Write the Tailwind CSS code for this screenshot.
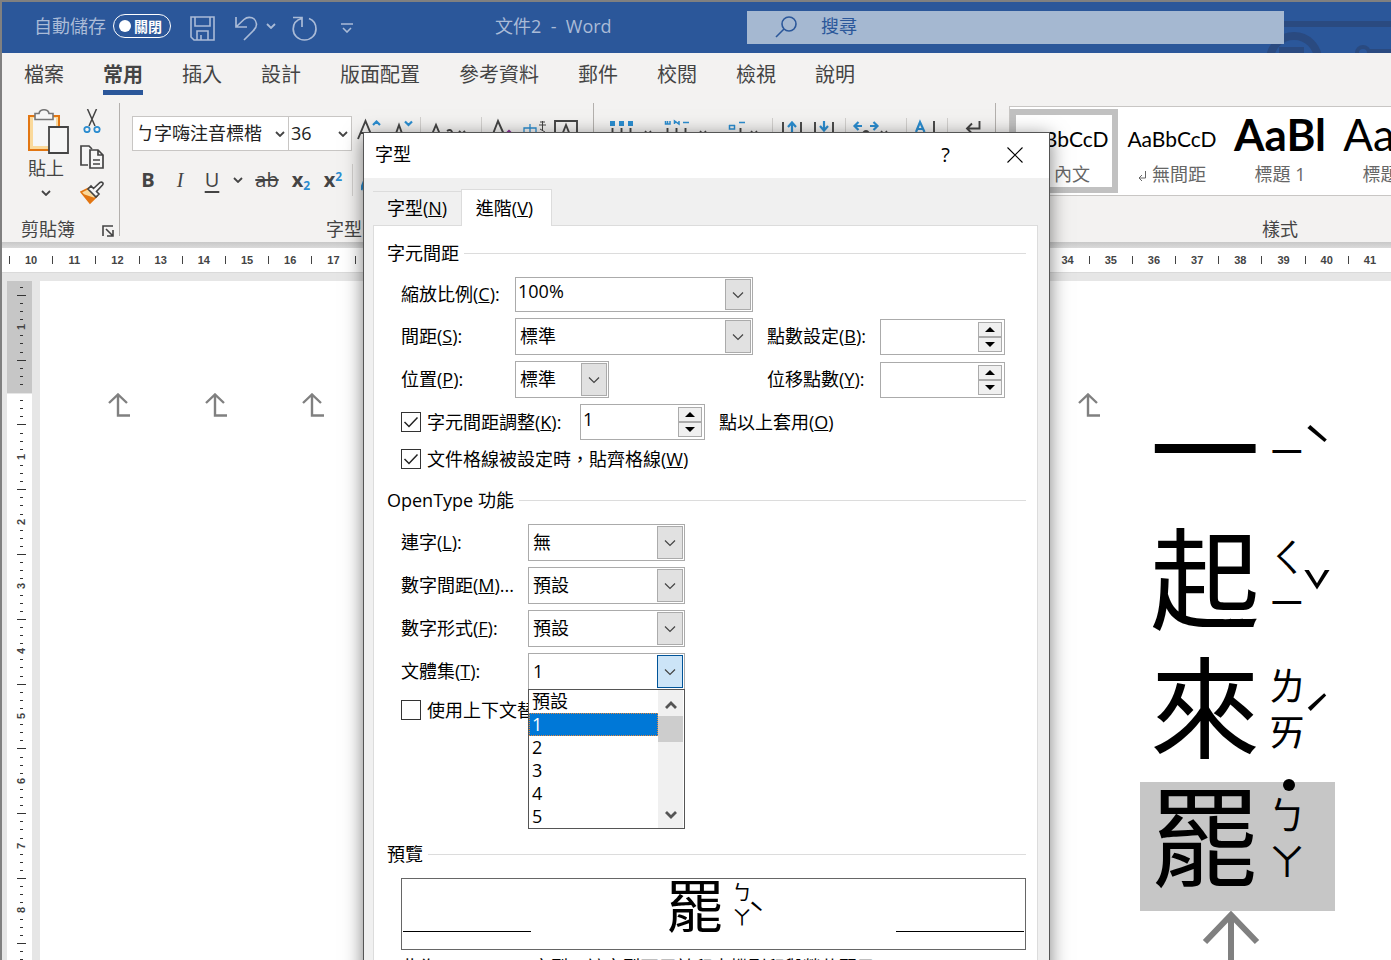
<!DOCTYPE html>
<html lang="zh-Hant">
<head>
<meta charset="utf-8">
<title>文件2 - Word</title>
<script src="https://cdn.jsdelivr.net/npm/@tailwindcss/browser@4"></script>
</head>
<body class="font-['Open_Sans','Noto_Sans_CJK_TC',sans-serif] text-[18px] font-[390]">
<svg class="hidden">
  <symbol id="chev" viewBox="0 0 12 8"><path d="M1 1.5 L6 6.5 L11 1.5" fill="none" stroke="#444" stroke-width="1.2"/></symbol>
  <symbol id="chevb" viewBox="0 0 10 6"><path d="M1 1 L5 5 L9 1" fill="none" stroke="currentColor" stroke-width="1.8"/></symbol>
  <symbol id="up" viewBox="0 0 10 5"><path d="M0 5 L5 0 L10 5Z"/></symbol>
  <symbol id="down" viewBox="0 0 10 5"><path d="M0 0 L5 5 L10 0Z"/></symbol>
  <symbol id="ret" viewBox="0 0 22 24"><path d="M1 10 L10 1.5 L19 10 M10 2 V22.5 H22" fill="none" stroke="#808080" stroke-width="2.4"/></symbol>
</svg>
<div class="relative flex h-screen flex-col overflow-hidden border-t-2 border-l-2 border-[#808080] bg-[#e6e6e6]">

  <header class="relative flex h-[51px] shrink-0 items-center bg-[#2b579a] pb-[3px] pl-8 text-[#aabbd7]">
    <svg class="absolute top-0 right-0 h-[51px] w-[130px]" viewBox="0 0 130 51" fill="none" stroke="#2a4a80"><path d="M20 22H130" stroke-width="6"/><circle cx="33" cy="58" r="24" stroke-width="8"/><path d="M18 48H43" stroke-width="6"/><circle cx="102" cy="51" r="6" stroke-width="4"/><path d="M108 49H130" stroke-width="4"/></svg>
    <span class="w-[71px] whitespace-nowrap">自動儲存</span>
    <button class="ml-2 flex h-6 w-[58px] items-center gap-[3px] rounded-full border border-white pl-[5px] text-[14px] font-bold text-white"><span class="size-3 rounded-full bg-white"></span>關閉</button>
    <button class="ml-[19px]" aria-label="儲存"><svg class="mt-1 size-[25px]" viewBox="0 0 25 25" fill="none" stroke="currentColor" stroke-width="1.6"><path d="M1 1H24V24H4L1 21Z M5 1V10H20V1 M7 24V15H18V24 M11 24V19"/></svg></button>
    <button class="ml-5" aria-label="復原"><svg class="mt-1 h-[25px] w-[23px]" viewBox="0 0 23 25" fill="none" stroke="currentColor" stroke-width="1.7"><path d="M1 1V11H12 M1.500 10.500L9 3.500C14 -1 21 2 21.500 8C21.700 11 20 13 18 15L9 24"/></svg></button>
    <button class="ml-2" aria-label="復原選項"><svg class="h-[6px] w-[10px]"><use href="#chevb"/></svg></button>
    <button class="ml-4" aria-label="重複"><svg class="mt-1 size-[25px]" viewBox="0 0 25 25" fill="none" stroke="currentColor" stroke-width="1.7"><path d="M1 1.500H10V11 M10 2.500C4 4 1.200 8 1.200 13C1.200 19 6 24 12.500 24C19 24 24 19 24 13C24 8 21 4 17 2.500"/></svg></button>
    <button class="ml-6" aria-label="自訂快速存取工具列"><svg class="mt-1 h-[10px] w-[12px]" viewBox="0 0 12 10" fill="none" stroke="currentColor" stroke-width="1.6"><path d="M0 1H12 M2 5L6 9L10 5"/></svg></button>
    <h1 class="ml-[142px] whitespace-pre">文件2  -  Word</h1>
    <label class="absolute top-[9px] right-[107px] left-[745px] flex h-[33px] items-center bg-[#a5b8d1] pb-[2px] pl-7 text-[#2b579a]">
      <svg class="size-[22px]" viewBox="0 0 22 22" fill="none" stroke="currentColor" stroke-width="1.6"><circle cx="14" cy="8" r="7"/><path d="M9 13L1 21"/></svg>
      <input class="ml-6 flex-1 bg-transparent outline-none placeholder:text-[#2b579a]" placeholder="搜尋" aria-label="搜尋">
    </label>
  </header>

  <nav class="flex h-[47px] shrink-0 gap-[39px] bg-[#f3f2f1] pt-1.5 pl-[22px] text-[20px] text-[#444]">
    <a href="#" class="leading-[31px]">檔案</a>
    <a href="#" class="h-9 border-b-[5px] border-[#2b579a] leading-[31px] font-bold">常用</a>
    <a href="#" class="leading-[31px]">插入</a>
    <a href="#" class="leading-[31px]">設計</a>
    <a href="#" class="leading-[31px]">版面配置</a>
    <a href="#" class="leading-[31px]">參考資料</a>
    <a href="#" class="leading-[31px]">郵件</a>
    <a href="#" class="leading-[31px]">校閱</a>
    <a href="#" class="leading-[31px]">檢視</a>
    <a href="#" class="leading-[31px]">說明</a>
  </nav>

  <section class="flex h-[142px] shrink-0 bg-[#f3f2f1] text-[#444]">
    <div class="my-[3px] mb-[6px] flex w-[118px] shrink-0 flex-col border-r border-[#b3b0ad]">
      <div class="flex gap-[11px] pt-1.5 pl-[26px]">
        <button class="flex w-[41px] flex-col items-start">
          <svg class="h-[45px] w-[41px]" viewBox="0 0 41 45" fill="none"><path d="M1 7H31V41H1Z" fill="#fad99b" stroke="#e27612" stroke-width="2"/><path d="M5 9H28V37H5Z" fill="#f6f6f6"/><path d="M7 10.500V4.500H11C12 -0.500 20 -0.500 21 4.500H25V10.500Z" fill="#f6f6f6" stroke="#777" stroke-width="1.6"/><path d="M21 18H40V44H21Z" fill="#f6f6f6" stroke="#444" stroke-width="1.8"/></svg>
          <span class="leading-7 whitespace-nowrap">貼上</span>
          <svg class="mt-2 ml-[13px] h-[6px] w-[10px]"><use href="#chevb"/></svg>
        </button>
        <div class="flex flex-col gap-3">
          <button aria-label="剪下"><svg class="size-6" viewBox="0 0 24 24" fill="none"><path d="M7.500 0L15 17 M16.500 0L9 17" stroke="#444" stroke-width="1.5"/><circle cx="7" cy="20.500" r="2.700" stroke="#2b8dd0" stroke-width="1.800"/><circle cx="17" cy="20.500" r="2.700" stroke="#2b8dd0" stroke-width="1.800"/></svg></button>
          <button aria-label="複製"><svg class="size-6" viewBox="0 0 24 24" fill="#f6f6f6" stroke="#444" stroke-width="1.700"><path d="M8 20H1V1H9L12 4"/><path d="M10 5H18L23 10V23H10Z M18 5V10H23 M13 15H20 M13 19H20"/></svg></button>
          <button aria-label="複製格式"><svg class="size-6" viewBox="0 0 24 24"><path d="M1 11L9 7L17 15L10 22Z" fill="#fad99b" stroke="#e27612" stroke-width="1.700"/><path d="M3 13L15 17L10 22Z" fill="#e27612"/><path d="M8 8L11 5L13.500 7.500L20 1.500C22 0.500 24 2 22.500 4L16.500 10.500L19 13L16 16Z" fill="#f6f6f6" stroke="#444" stroke-width="1.600"/></svg></button>
        </div>
      </div>
      <div class="mt-auto flex h-[14px] items-center justify-between pr-[5px] pl-[19px] leading-[14px]"><span>剪貼簿</span>
        <button aria-label="剪貼簿設定"><svg class="mt-1 size-3" viewBox="0 0 12 12" fill="none" stroke="#444" stroke-width="1.600"><path d="M1 11V1H11 M4 4L11 11 M11 5V11H5"/></svg></button></div>
    </div>
    <div class="my-[3px] mb-[6px] flex w-[474px] shrink-0 flex-col border-r border-[#b3b0ad] pl-3">
      <div class="flex pt-[13px]">
        <label class="flex h-[35px] w-[157px] items-center border border-[#c8c6c4] bg-white pr-[3px] pl-[3px]"><input class="w-0 flex-1 text-[#222] outline-none" value="ㄅ字嗨注音標楷" aria-label="字型"><svg class="h-[6px] w-[10px]"><use href="#chevb"/></svg></label>
        <label class="-ml-px flex h-[35px] w-[64px] items-center border border-[#c8c6c4] bg-white pr-[3px] pl-[2px]"><input class="w-0 flex-1 text-[#222] outline-none" value="36" aria-label="字型大小"><svg class="h-[6px] w-[10px]"><use href="#chevb"/></svg></label>
        <svg class="h-[35px] w-[235px]" viewBox="352 116 235 35" fill="none" stroke="#444" stroke-width="1.900"><path d="M358 139L365.500 121L373 139 M361 133H370"/><path d="M394 139L399 125L404 139"/><path d="M430 139L436 125L442 139 M447 131Q453 127 453 139 M459 131L462 134L465 131"/><path d="M491 139L498 121L506 139"/><path d="M555 140V121H577V140 M560 140L566 125L572 140"/><path d="M373 125L376.500 121.500L380 125 M405 121.500L408.500 125L412 121.500" stroke="#2b8dd0" stroke-width="2.200"/><path d="M505 135L509 131L513 135" stroke="#8b2f97" stroke-width="2.200"/><path d="M524 128H536V140H524Z M530 124V140" stroke="#2b8dd0" stroke-width="1.300"/><path d="M540 122H545M542.500 121V131M539 125H546M540 129L545 132" stroke-width="1"/><path d="M420.500 117V150 M481.500 117V150" stroke="#d2d0ce" stroke-width="1"/></svg>
      </div>
      <div class="mt-[13px] flex h-8 items-center font-['Open_Sans',sans-serif] text-[20px]">
        <button class="ml-2 w-4 font-bold">B</button>
        <button class="ml-4 w-4 font-['Liberation_Serif',serif] font-normal italic">I</button>
        <button class="ml-4 w-4 font-normal underline underline-offset-4">U</button>
        <button class="ml-[13px]" aria-label="底線樣式"><svg class="h-[6px] w-[10px]"><use href="#chevb"/></svg></button>
        <button class="ml-3 w-6 font-normal line-through">ab</button>
        <button class="ml-3 w-5 font-bold">x<sub class="text-[12px] text-[#2b8dd0]">2</sub></button>
        <button class="ml-3 w-5 font-bold">x<sup class="text-[12px] text-[#2b8dd0]">2</sup></button>
        <span class="ml-[9px] h-8 border-l border-[#d2d0ce]"></span>
        <svg class="ml-2 h-6 w-4" viewBox="0 0 16 24"><path d="M0 22L7 4L14 22" fill="none" stroke="#2b8dd0" stroke-width="3"/></svg>
      </div>
      <div class="mt-auto pl-[194px] leading-[14px]">字型</div>
    </div>
    <div class="my-[3px] mb-[6px] w-[402px] shrink-0 border-r border-[#b3b0ad]">
      <svg class="mt-[13px] h-[35px] w-[400px]" viewBox="594 116 400 35" fill="none" stroke="#444" stroke-width="1.900"><path d="M610 121H615V126H610Z M619 121H624V126H619Z M628 121H633V126H628Z" fill="#2b8dd0" stroke="none"/><path d="M612.500 128V140 M621.500 128V140 M630.500 128V140 M667.500 128V140 M676.500 128V140 M685.500 128V140 M740.500 128V140"/><path d="M645 131L648 134L651 131 M700 131L703 134L706 131 M751 131L754 134L757 131 M881 131L884 134L887 131" stroke-width="1.600"/><path d="M665.500 121V124H670V121 M667.500 121V124 M674.500 124V121L679 124V121 M683 122.500H689 M729 125.500H735 M729.500 125V129H734.500V125 M739 122.500H745" stroke="#2b8dd0" stroke-width="1.500"/><path d="M783 122V140 M801 122V140 M815 122V140 M833 122V140 M934 121V140"/><path d="M792 140V122.500 M788 127L792 122.500L796 127 M824 121V130 M820 126L824 130.500L828 126 M862 126H854.500 M858.500 122L854.500 126L858.500 130 M870 126H877.500 M873.500 122L877.500 126L873.500 130 M916 132L920 122L924.500 132 M917 129H923" stroke="#2b8dd0" stroke-width="2.200"/><path d="M863 133Q866 129 869 133" stroke-width="2"/><path d="M979.500 121V128.500H967 M972 123.500L967 128.500L972 133.500"/><path d="M772.500 118V150 M845.500 118V150 M906.500 118V150 M947.500 118V150" stroke="#d2d0ce" stroke-width="1"/></svg>
    </div>
    <div class="flex min-w-0 flex-1 flex-col overflow-hidden pl-[13px]">
      <div class="mt-[6px] flex h-[90px] border border-r-0 border-[#c8c6c4] bg-white pt-[2px] text-[#666]">
        <button class="flex h-[84px] w-[108px] shrink-0 flex-col items-center border-[6px] border-[#c1c1c1] pt-[6px]"><span class="font-[Lato] text-[21px] leading-[36px] font-normal text-black">AaBbCcD</span><span class="mt-[3px] ml-4 leading-7">內文</span></button>
        <button class="flex h-[84px] w-[108px] shrink-0 flex-col items-center pt-3"><span class="font-[Lato] text-[21px] leading-[36px] font-normal text-black">AaBbCcD</span><span class="mt-[3px] flex items-center gap-[6px] leading-7"><svg class="mt-1 h-[10px] w-2" viewBox="0 0 8 10" fill="none" stroke="#666"><path d="M7.500 0V7H1 M4 4L1 7L4 10"/></svg>無間距</span></button>
        <button class="flex h-[84px] w-[108px] shrink-0 flex-col items-center pt-[3px]"><span class="font-[Lato] text-[44px] leading-[44px] font-bold text-black">AaBl</span><span class="mt-1 leading-7">標題 1</span></button>
        <button class="flex h-[84px] w-[108px] shrink-0 flex-col items-center pt-[3px]"><span class="font-[Lato] text-[44px] leading-[44px] font-normal text-black">AaBl</span><span class="mt-1 leading-7">標題 2</span></button>
      </div>
      <div class="mt-[24px] pl-[253px] leading-[18px] whitespace-nowrap">樣式</div>
    </div>
  </section>
  <div class="h-[6px] shrink-0 bg-linear-to-b from-[#c8c8c8] to-[#dadada]"></div>

  <div id="hruler" class="flex h-6 shrink-0 items-center bg-white pl-[7px] font-['Liberation_Sans',sans-serif] text-[11px] font-bold text-[#444]"></div>

  <main class="flex min-h-0 flex-1 gap-2 border-t border-[#dadada] pt-2 pl-[5px]">
    <svg id="vruler" class="h-full w-[25px] shrink-0 font-['Liberation_Sans',sans-serif] text-[11px] font-bold"></svg>
    <div class="flex flex-1 overflow-hidden bg-white">
      <div id="marks" class="mt-28 ml-[68px] flex gap-[75px]"></div>
      <div class="mt-[114px] ml-10 w-[195px] shrink-0 font-['Noto_Sans_CJK_TC',sans-serif] font-normal text-black">
        <div class="flex h-[129px] pl-[10px]"><span class="w-[110px] text-[110px] leading-[98px]">一</span><span class="mt-8 ml-2 w-[38px] text-[38px] leading-[46px]">ㄧ</span><span class="mt-6 -ml-1 w-0 text-[50px] leading-[50px]">ˋ</span></div>
        <div class="flex h-[129px] pl-[10px]"><span class="w-[110px] text-[110px] leading-[98px]">起</span><span class="mt-2 ml-2 w-[38px] text-[38px] leading-[46px]">ㄑㄧ</span><span class="mt-10 -ml-1 w-0 text-[50px] leading-[50px]">ˇ</span></div>
        <div class="flex h-[129px] pl-[10px]"><span class="w-[110px] text-[110px] leading-[98px]">來</span><span class="mt-2 ml-2 w-[38px] text-[38px] leading-[46px]">ㄌㄞ</span><span class="mt-9 -ml-1 w-0 text-[50px] leading-[50px]">ˊ</span></div>
        <div class="relative flex h-[129px] bg-[#c6c6c6] pl-[10px]"><span class="w-[110px] text-[110px] leading-[98px]">罷</span><span class="mt-2 ml-2 w-[38px] text-[38px] leading-[46px]">ㄅㄚ</span><span class="absolute -top-[3px] left-[143px] size-3 rounded-full bg-black"></span></div>
        <svg class="ml-[62px] h-[60px] w-[58px]" viewBox="0 0 58 60" fill="none" stroke="#808080" stroke-width="6"><path d="M3 31L29 4L55 31 M29 5V60"/></svg>
      </div>
    </div>
  </main>

  <div role="dialog" aria-label="字型" class="absolute top-[130px] left-[361px] w-[687px] border border-[#555] bg-[#f0f0f0] text-black shadow-[0_4px_18px_rgba(0,0,0,0.5)]">
    <div class="flex h-[45px] items-center bg-white pr-[26px] pb-[2px] pl-[11px]">
      <span>字型</span>
      <button class="mr-[57px] ml-auto text-[20px]" aria-label="說明">?</button>
      <button aria-label="關閉"><svg class="size-4" viewBox="0 0 16 16" stroke="#000" stroke-width="1.100"><path d="M0.500 0.500L15.500 15.500M15.500 0.500L0.500 15.500"/></svg></button>
    </div>
    <div class="px-[9px] pt-[11px] pb-10">
      <div class="relative -mb-px flex items-end">
        <button class="h-[35px] w-[88px] border-t border-b border-[#dcdcdc]">字型(<u>N</u>)</button>
        <button class="h-[37px] w-[91px] border border-b-0 border-[#dcdcdc] bg-white pr-1">進階(<u>V</u>)</button>
      </div>
      <div class="mr-[2px] border border-[#dcdcdc] bg-white pt-[15px] pr-[11px] pl-[13px]">
        <h2 class="flex h-6 items-center gap-[5px]">字元間距<span class="flex-1 border-t border-[#dcdcdc]"></span></h2>
        <div class="pl-[14px]">
          <div class="mt-3 flex h-[35px] items-center"><label for="scale" class="w-[114px]">縮放比例(<u>C</u>):</label>
            <div class="flex h-full w-[238px] border border-[#ababab] p-px"><input id="scale" value="100%" class="w-0 flex-1 pb-1.5 pl-px outline-none"><button class="flex w-[26px] items-center justify-center border border-[#ababab] bg-[#e1e1e1]" aria-label="選擇縮放比例"><svg class="h-2 w-3"><use href="#chev"/></svg></button></div></div>
          <div class="mt-1.5 flex h-[37px] items-center"><label for="spacing" class="w-[114px]">間距(<u>S</u>):</label>
            <div class="flex h-full w-[238px] border border-[#ababab] p-px"><select id="spacing" class="flex-1 appearance-none pl-[3px] outline-none"><option>標準</option></select><span class="flex w-[26px] items-center justify-center border border-[#ababab] bg-[#e1e1e1]"><svg class="h-2 w-3"><use href="#chev"/></svg></span></div>
            <label for="by1" class="ml-[14px] w-[113px]">點數設定(<u>B</u>):</label>
            <div class="flex h-9 w-[125px] border border-[#ababab] p-[2px]"><input id="by1" class="w-0 flex-1 outline-none"><div class="flex w-6 flex-col"><button class="flex h-[15px] flex-1 items-center justify-center border border-[#ababab] bg-[#f0f0f0]" aria-label="增加"><svg class="h-[5px] w-[10px]"><use href="#up"/></svg></button><button class="flex h-[15px] flex-1 items-center justify-center border border-[#ababab] bg-[#f0f0f0]" aria-label="減少"><svg class="h-[5px] w-[10px]"><use href="#down"/></svg></button></div></div></div>
          <div class="mt-1.5 flex h-[37px] items-center"><label for="pos" class="w-[114px]">位置(<u>P</u>):</label>
            <div class="flex h-full w-[94px] border border-[#ababab] p-px"><select id="pos" class="flex-1 appearance-none pl-[3px] outline-none"><option>標準</option></select><span class="flex w-[26px] items-center justify-center border border-[#ababab] bg-[#e1e1e1]"><svg class="h-2 w-3"><use href="#chev"/></svg></span></div>
            <label for="by2" class="ml-[158px] w-[113px]">位移點數(<u>Y</u>):</label>
            <div class="flex h-9 w-[125px] border border-[#ababab] p-[2px]"><input id="by2" class="w-0 flex-1 outline-none"><div class="flex w-6 flex-col"><button class="flex h-[15px] flex-1 items-center justify-center border border-[#ababab] bg-[#f0f0f0]" aria-label="增加"><svg class="h-[5px] w-[10px]"><use href="#up"/></svg></button><button class="flex h-[15px] flex-1 items-center justify-center border border-[#ababab] bg-[#f0f0f0]" aria-label="減少"><svg class="h-[5px] w-[10px]"><use href="#down"/></svg></button></div></div></div>
          <div class="mt-1.5 flex h-9 items-center"><label class="flex w-[179px] items-center gap-1.5"><span class="grid"><input type="checkbox" checked class="peer col-start-1 row-start-1 size-5 appearance-none border border-[#333] bg-white"><svg class="pointer-events-none invisible col-start-1 row-start-1 size-5 peer-checked:visible" viewBox="0 0 20 20" fill="none" stroke="#222" stroke-width="1.500"><path d="M3.500 10L8 14.500L16.500 5.500"/></svg></span><span class="whitespace-nowrap">字元間距調整(<u>K</u>):</span></label>
            <div class="flex h-9 w-[125px] border border-[#ababab] p-[2px]"><input id="kern" value="1" class="w-0 flex-1 pb-1.5 outline-none"><div class="flex w-6 flex-col"><button class="flex h-[15px] flex-1 items-center justify-center border border-[#ababab] bg-[#f0f0f0]" aria-label="增加"><svg class="h-[5px] w-[10px]"><use href="#up"/></svg></button><button class="flex h-[15px] flex-1 items-center justify-center border border-[#ababab] bg-[#f0f0f0]" aria-label="減少"><svg class="h-[5px] w-[10px]"><use href="#down"/></svg></button></div></div>
            <label for="kern" class="ml-[14px]">點以上套用(<u>O</u>)</label></div>
          <label class="mt-2 flex h-[22px] items-center gap-1.5"><span class="grid"><input type="checkbox" checked class="peer col-start-1 row-start-1 size-5 appearance-none border border-[#333] bg-white"><svg class="pointer-events-none invisible col-start-1 row-start-1 size-5 peer-checked:visible" viewBox="0 0 20 20" fill="none" stroke="#222" stroke-width="1.500"><path d="M3.500 10L8 14.500L16.500 5.500"/></svg></span><span>文件格線被設定時，貼齊格線(<u>W</u>)</span></label>
        </div>
        <h2 class="mt-[18px] flex h-6 items-center gap-[5px]">OpenType 功能<span class="flex-1 border-t border-[#dcdcdc]"></span></h2>
        <div class="flex flex-col gap-1.5 pt-3 pl-[14px]">
          <div class="flex h-[37px] items-center"><label for="liga" class="w-[127px]">連字(<u>L</u>):</label>
            <div class="flex h-full w-[157px] border border-[#ababab] p-px"><select id="liga" class="flex-1 appearance-none pl-[3px] outline-none"><option>無</option></select><span class="flex w-[26px] items-center justify-center border border-[#ababab] bg-[#e1e1e1]"><svg class="h-2 w-3"><use href="#chev"/></svg></span></div></div>
          <div class="flex h-[37px] items-center"><label for="nsp" class="w-[127px]">數字間距(<u>M</u>)...</label>
            <div class="flex h-full w-[157px] border border-[#ababab] p-px"><select id="nsp" class="flex-1 appearance-none pl-[3px] outline-none"><option>預設</option></select><span class="flex w-[26px] items-center justify-center border border-[#ababab] bg-[#e1e1e1]"><svg class="h-2 w-3"><use href="#chev"/></svg></span></div></div>
          <div class="flex h-[37px] items-center"><label for="nform" class="w-[127px]">數字形式(<u>F</u>):</label>
            <div class="flex h-full w-[157px] border border-[#ababab] p-px"><select id="nform" class="flex-1 appearance-none pl-[3px] outline-none"><option>預設</option></select><span class="flex w-[26px] items-center justify-center border border-[#ababab] bg-[#e1e1e1]"><svg class="h-2 w-3"><use href="#chev"/></svg></span></div></div>
          <div class="flex h-[37px] items-center"><label for="sset" class="w-[127px]">文體集(<u>T</u>):</label>
            <div class="relative flex h-full w-[157px] border border-[#ababab] p-px"><select id="sset" class="flex-1 appearance-none pl-[3px] outline-none"><option>1</option></select><span class="flex w-[26px] items-center justify-center border border-[#005499] bg-[#cce4f7]"><svg class="h-2 w-3"><use href="#chev"/></svg></span>
              <div class="absolute top-[35px] -left-px z-10 flex h-[140px] w-[157px] border border-[#555] bg-white">
                <ul role="listbox" aria-label="文體集" class="flex-1 leading-[23px]">
                  <li role="option" class="h-[23px] pl-[3px]">預設</li>
                  <li role="option" aria-selected="true" class="h-[23px] bg-[#0078d7] pl-[3px] text-white outline-1 -outline-offset-1 outline-[#e8883a] outline-dotted">1</li>
                  <li role="option" class="h-[23px] pl-[3px]">2</li>
                  <li role="option" class="h-[23px] pl-[3px]">3</li>
                  <li role="option" class="h-[23px] pl-[3px]">4</li>
                  <li role="option" class="h-[23px] pl-[3px]">5</li>
                </ul>
                <div class="mr-px flex w-[25px] flex-col items-center bg-[#f0f0f0] text-[#555]">
                  <svg class="mt-[10px] h-[9px] w-3" viewBox="0 0 12 9" fill="none" stroke="currentColor" stroke-width="2.800"><path d="M1 8L6 3L11 8"/></svg>
                  <span class="mt-[7px] h-[26px] w-full bg-[#cdcdcd]"></span>
                  <svg class="mt-auto mb-2 h-[9px] w-3" viewBox="0 0 12 9" fill="none" stroke="currentColor" stroke-width="2.800"><path d="M1 1L6 6L11 1"/></svg>
                </div>
              </div>
            </div></div>
        </div>
        <label class="mt-[9px] ml-[14px] flex h-[22px] w-[240px] items-center gap-1.5"><input type="checkbox" class="size-5 appearance-none border border-[#333] bg-white"><span>使用上下文替代</span></label>
        <h2 class="mt-[121px] flex h-6 items-center gap-[5px]">預覽<span class="flex-1 border-t border-[#dcdcdc]"></span></h2>
        <div class="mt-3 ml-[14px] flex h-[72px] justify-between overflow-hidden border border-[#666] px-px font-['Noto_Sans_CJK_TC',sans-serif] font-normal">
          <span class="h-[53px] w-32 border-b border-black"></span>
          <div class="flex pl-1"><span class="-mt-1 text-[58px] leading-[56px]">罷</span><span class="ml-2 w-5 text-[20px] leading-[25px]">ㄅㄚ</span><span class="mt-5 -ml-1 text-[28px] leading-[28px]">ˋ</span></div>
          <span class="h-[53px] w-32 border-b border-black"></span>
        </div>
        <p class="mt-[3px] ml-[14px] h-10 leading-7">此為 OpenType 字型。該字型可用於印表機列印與螢幕顯示。</p>
      </div>
    </div>
  </div>
</div>
<script>
  // Horizontal ruler: one cell per unit
  document.getElementById('hruler').innerHTML = Array.from({length: 32}, (_, i) =>
    `<span class="flex h-2 flex-1 items-center justify-center border-l border-[#444]">${i + 10}</span>`).join('');
  // Paragraph marks of the vertical text lines
  document.getElementById('marks').innerHTML = '<svg class="h-6 w-[22px] shrink-0"><use href="#ret"/></svg>'.repeat(11);
  // Vertical ruler: eight steps per unit, zero at the top margin
  let r = '<rect width="25" height="112" fill="#c6c6c6"/><rect y="113" width="25" height="900" fill="#fff"/>';
  for (let k = -13; k < 72; k++) {
    const y = Math.round(111 + k * 8.1);
    if (k === 0) continue;
    if (k % 8 === 0) r += `<text transform="translate(25 ${y + 3}) rotate(-90)" x="3" y="-7" text-anchor="middle" fill="#444" font-size="11">${Math.abs(k / 8)}</text>`;
    else if (k % 4 === 0) r += `<rect x="10" y="${y}" width="9" height="1" fill="#333"/>`;
    else r += `<rect x="13" y="${y}" width="3" height="1" fill="#333"/>`;
  }
  document.getElementById('vruler').innerHTML = r;
</script>
</body>
</html>
